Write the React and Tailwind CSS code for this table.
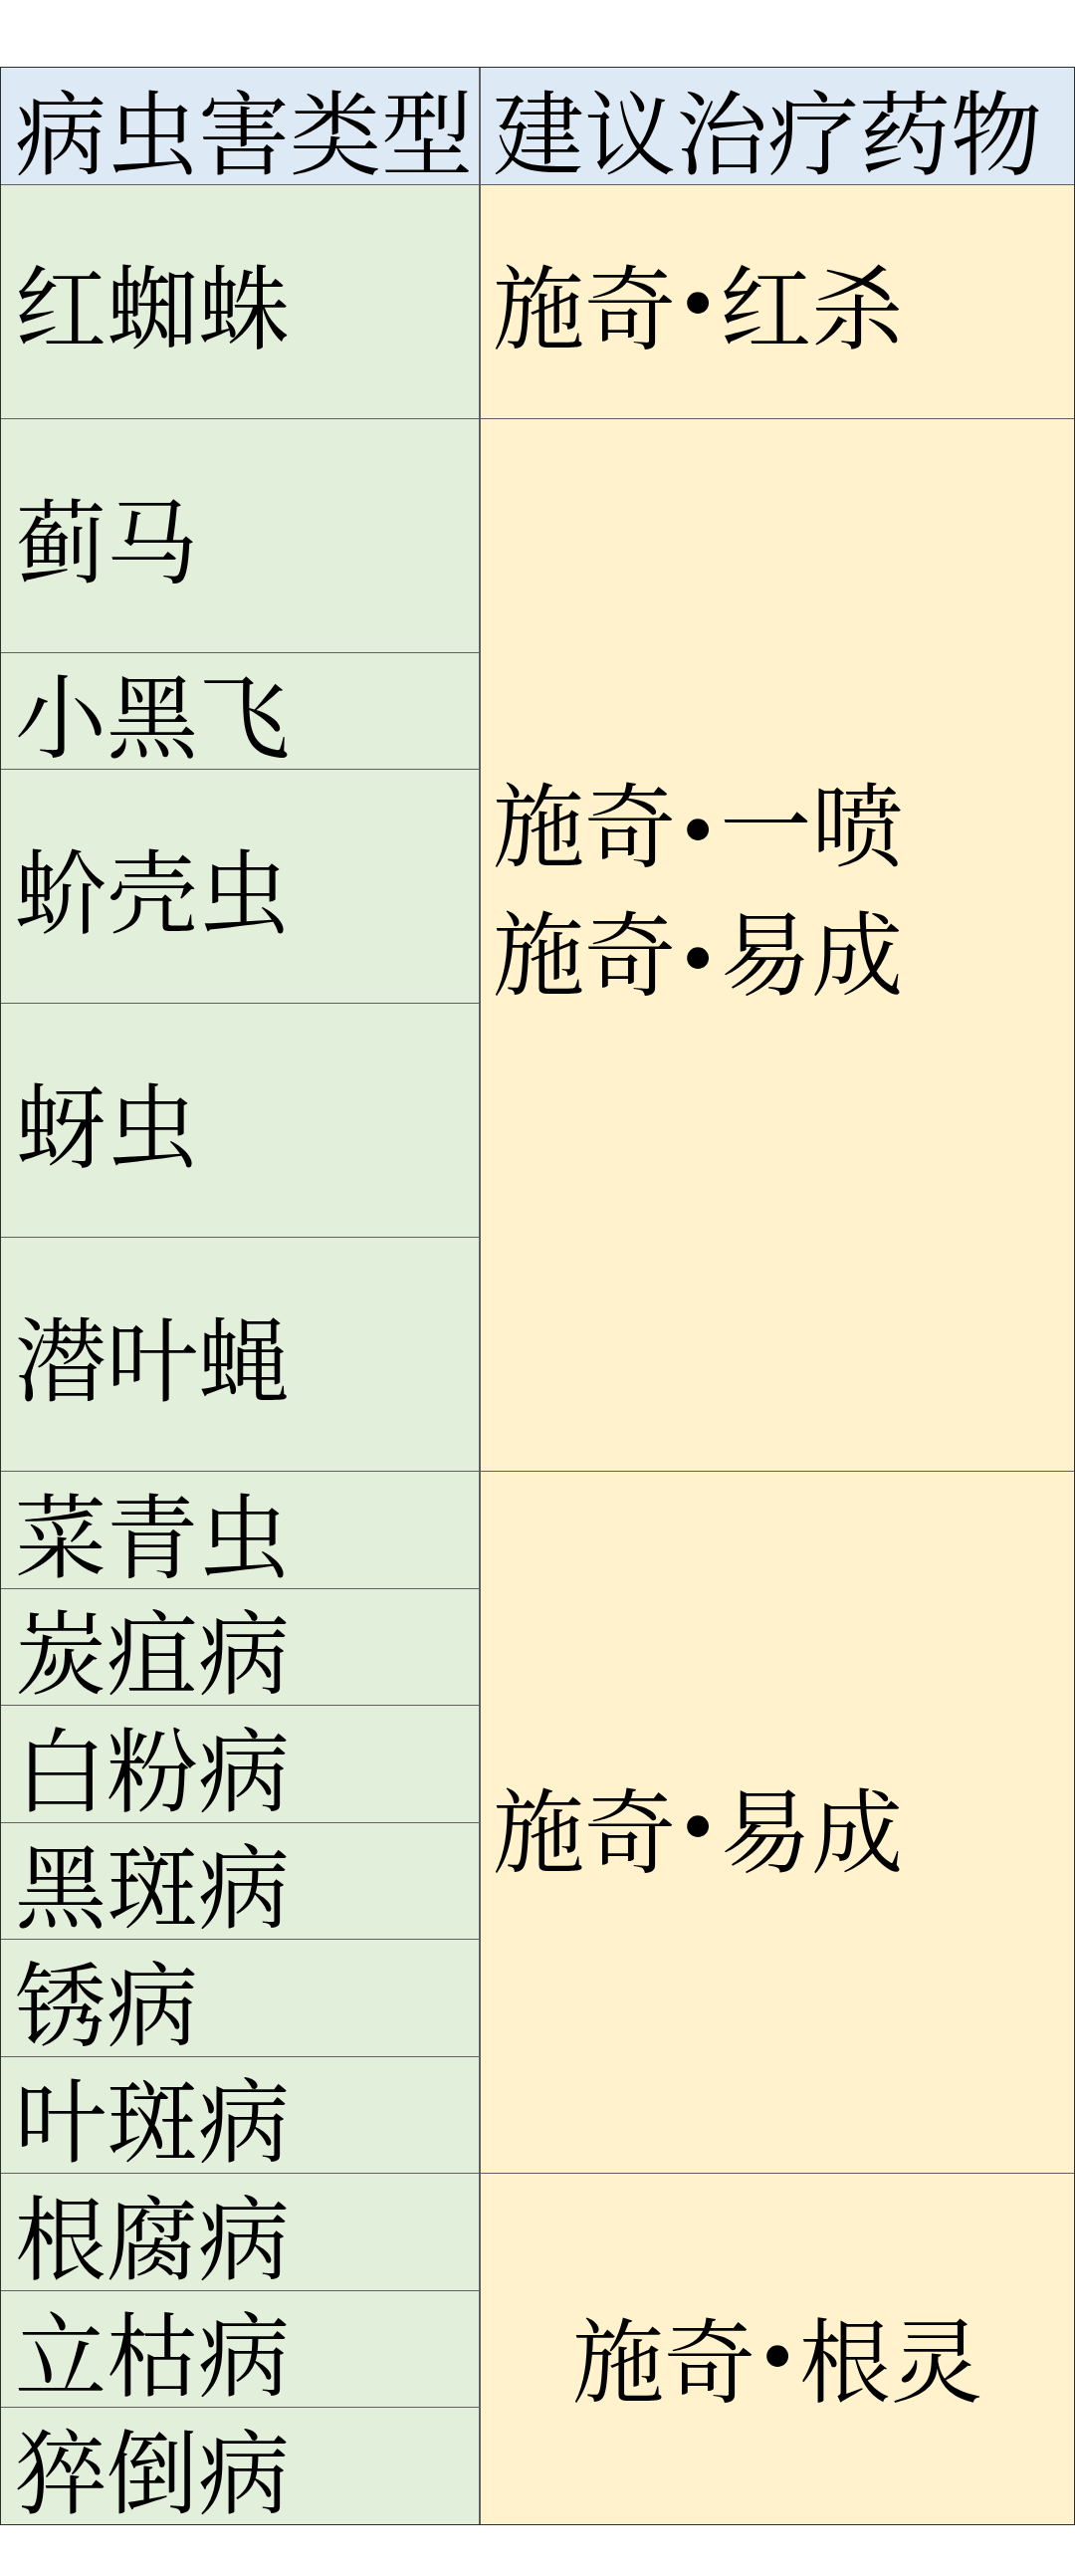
import React from 'react';

const font = "font-['Noto_Serif_CJK_SC','Noto_Sans_CJK_SC',serif]";

// Latin bullet: narrower and bolder than the full-width CJK one
const Dot = () => <span className="mx-[6px] font-['Liberation_Serif',serif]">•</span>;

const App = () => {
    return (
        <div className={`min-h-[2587px] w-[1080px] bg-white pt-[67px] text-black ${font}`}>
            {/* Table: 21 equal row units, merged cells span several */}
            <div className="grid h-[2469px] grid-cols-[480px_1fr] grid-rows-[repeat(21,minmax(0,1fr))] gap-x-[2px] gap-y-px border border-[#2e2e2e] bg-[#5f5f5f] text-[92px] leading-none">

                {/* Header */}
                <div className="col-start-1 row-start-1 flex items-center bg-[#dde9f5] pl-[14px] pt-[4px]">病虫害类型</div>
                <div className="col-start-2 row-start-1 flex items-center bg-[#dde9f5] pl-[12px] pt-[4px]">建议治疗药物</div>

                {/* Pest / disease column */}
                <div className="col-start-1 row-start-2 row-span-2 flex items-center bg-[#e2efda] pl-[14px]">红蜘蛛</div>
                <div className="col-start-1 row-start-4 row-span-2 flex items-center bg-[#e2efda] pl-[14px]">蓟马</div>
                <div className="col-start-1 row-start-6 flex items-center bg-[#e2efda] pl-[14px]">小黑飞</div>
                <div className="col-start-1 row-start-7 row-span-2 flex items-center bg-[#e2efda] pl-[14px]">蚧壳虫</div>
                <div className="col-start-1 row-start-9 row-span-2 flex items-center bg-[#e2efda] pl-[14px]">蚜虫</div>
                <div className="col-start-1 row-start-11 row-span-2 flex items-center bg-[#e2efda] pl-[14px]">潜叶蝇</div>
                <div className="col-start-1 row-start-13 flex items-center bg-[#e2efda] pl-[14px]">菜青虫</div>
                <div className="col-start-1 row-start-14 flex items-center bg-[#e2efda] pl-[14px]">炭疽病</div>
                <div className="col-start-1 row-start-15 flex items-center bg-[#e2efda] pl-[14px]">白粉病</div>
                <div className="col-start-1 row-start-16 flex items-center bg-[#e2efda] pl-[14px]">黑斑病</div>
                <div className="col-start-1 row-start-17 flex items-center bg-[#e2efda] pl-[14px]">锈病</div>
                <div className="col-start-1 row-start-18 flex items-center bg-[#e2efda] pl-[14px]">叶斑病</div>
                <div className="col-start-1 row-start-19 flex items-center bg-[#e2efda] pl-[14px]">根腐病</div>
                <div className="col-start-1 row-start-20 flex items-center bg-[#e2efda] pl-[14px]">立枯病</div>
                <div className="col-start-1 row-start-21 flex items-center bg-[#e2efda] pl-[14px]">猝倒病</div>

                {/* Medicine column (merged cells) */}
                <div className="col-start-2 row-start-2 row-span-2 flex items-center bg-[#fff2cc] pl-[12px]">施奇<Dot />红杀</div>
                <div className="col-start-2 row-start-4 row-span-9 flex flex-col justify-center bg-[#fff2cc] pb-[114px] pl-[12px] leading-[120px]">
                    <span>施奇<Dot />一喷</span>
                    <span>施奇<Dot />易成</span>
                </div>
                <div className="col-start-2 row-start-13 row-span-6 flex items-center bg-[#fff2cc] pl-[12px] pt-[6px]">施奇<Dot />易成</div>
                <div className="col-start-2 row-start-19 row-span-3 flex items-center justify-center bg-[#fff2cc] pt-[12px]">施奇<Dot />根灵</div>
            </div>
        </div>
    );
};

export default App;
